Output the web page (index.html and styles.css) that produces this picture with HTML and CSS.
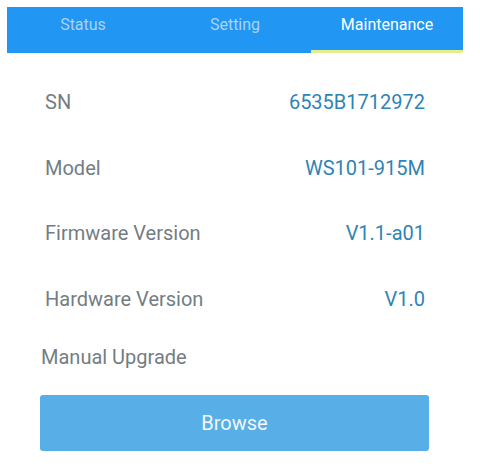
FILE: index.html
```html
<!DOCTYPE html>
<html>
<head>
<meta charset="utf-8">
<link rel="stylesheet" href="styles.css">
</head>
<body>
<div class="page">
  <nav class="tabs">
    <div class="tab">Status</div>
    <div class="tab">Setting</div>
    <div class="tab active">Maintenance</div>
  </nav>
  <div class="rows">
    <div class="row"><span class="label">SN</span><span class="value">6535B1712972</span></div>
    <div class="row"><span class="label">Model</span><span class="value">WS101-915M</span></div>
    <div class="row"><span class="label">Firmware Version</span><span class="value">V1.1-a01</span></div>
    <div class="row"><span class="label">Hardware Version</span><span class="value">V1.0</span></div>
  </div>
  <div class="upgrade">
    <div class="upgrade-label">Manual Upgrade</div>
    <button class="browse">Browse</button>
  </div>
</div>
</body>
</html>
```
FILE: styles.css
```css
html, body {
  margin: 0;
  padding: 0;
  background: #ffffff;
}
body {
  font-family: Roboto, "Liberation Sans", sans-serif;
  width: 480px;
  height: 473px;
  overflow: hidden;
}
.page {
  padding-top: 7px;
}
.tabs {
  display: flex;
  margin: 0 17px 0 7px;
  height: 46px;
  background: #2196f3;
}
.tab {
  flex: 1;
  text-align: center;
  font-size: 16px;
  line-height: 22px;
  padding-top: 7px;
  color: #a9d3f7;
  box-sizing: border-box;
}
.tab.active {
  color: #ffffff;
  border-bottom: 3px solid #e4ef8c;
}
.rows {
  display: flex;
  flex-direction: column;
  padding: 16px 55px 0 45px;
}
.row {
  display: flex;
  justify-content: space-between;
  align-items: center;
  height: 65.7px;
  font-size: 20px;
  line-height: 24px;
}
.label {
  color: #737d83;
}
.value {
  color: #2f84b5;
}
.upgrade {
  padding: 0 51px 0 40px;
}
.upgrade-label {
  margin-top: 13px;
  padding-left: 1px;
  font-size: 20px;
  line-height: 24px;
  color: #737d83;
}
.browse {
  display: block;
  width: 389px;
  height: 56px;
  margin-top: 26px;
  border: none;
  border-radius: 3px;
  background: #58aee6;
  color: #f2f8fd;
  font-family: Roboto, "Liberation Sans", sans-serif;
  font-size: 20px;
  padding: 0;
}
```
